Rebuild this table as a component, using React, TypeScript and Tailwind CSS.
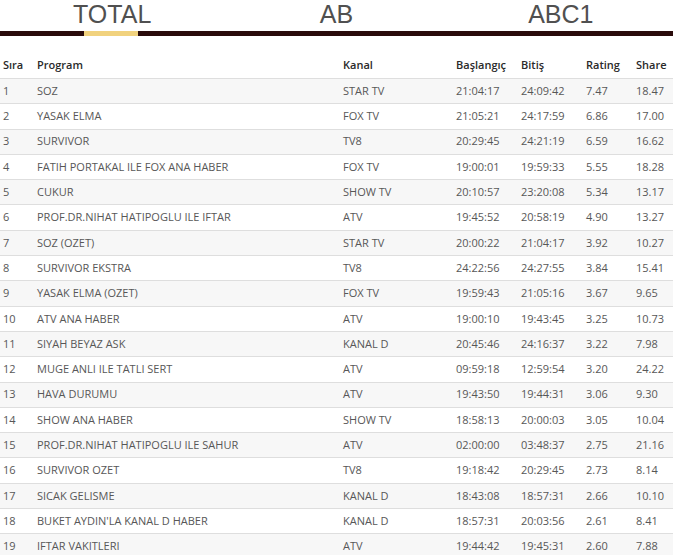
import React from "react";

const rows: [string, string, string, string, string, string][] = [
  ["SOZ", "STAR TV", "21:04:17", "24:09:42", "7.47", "18.47"],
  ["YASAK ELMA", "FOX TV", "21:05:21", "24:17:59", "6.86", "17.00"],
  ["SURVIVOR", "TV8", "20:29:45", "24:21:19", "6.59", "16.62"],
  ["FATIH PORTAKAL ILE FOX ANA HABER", "FOX TV", "19:00:01", "19:59:33", "5.55", "18.28"],
  ["CUKUR", "SHOW TV", "20:10:57", "23:20:08", "5.34", "13.17"],
  ["PROF.DR.NIHAT HATIPOGLU ILE IFTAR", "ATV", "19:45:52", "20:58:19", "4.90", "13.27"],
  ["SOZ (OZET)", "STAR TV", "20:00:22", "21:04:17", "3.92", "10.27"],
  ["SURVIVOR EKSTRA", "TV8", "24:22:56", "24:27:55", "3.84", "15.41"],
  ["YASAK ELMA (OZET)", "FOX TV", "19:59:43", "21:05:16", "3.67", "9.65"],
  ["ATV ANA HABER", "ATV", "19:00:10", "19:43:45", "3.25", "10.73"],
  ["SIYAH BEYAZ ASK", "KANAL D", "20:45:46", "24:16:37", "3.22", "7.98"],
  ["MUGE ANLI ILE TATLI SERT", "ATV", "09:59:18", "12:59:54", "3.20", "24.22"],
  ["HAVA DURUMU", "ATV", "19:43:50", "19:44:31", "3.06", "9.30"],
  ["SHOW ANA HABER", "SHOW TV", "18:58:13", "20:00:03", "3.05", "10.04"],
  ["PROF.DR.NIHAT HATIPOGLU ILE SAHUR", "ATV", "02:00:00", "03:48:37", "2.75", "21.16"],
  ["SURVIVOR OZET", "TV8", "19:18:42", "20:29:45", "2.73", "8.14"],
  ["SICAK GELISME", "KANAL D", "18:43:08", "18:57:31", "2.66", "10.10"],
  ["BUKET AYDIN'LA KANAL D HABER", "KANAL D", "18:57:31", "20:03:56", "2.61", "8.41"],
  ["IFTAR VAKITLERI", "ATV", "19:44:42", "19:45:31", "2.60", "7.88"],
];

const cols = "grid grid-cols-[34px_306px_113px_65px_65px_50px_40px] items-center";

function Tab({ label }: { label: string }) {
  return (
    <div className="text-[25px] leading-[28px] text-[#505050] font-['Liberation_Sans',sans-serif]">
      {label}
    </div>
  );
}

export default function App() {
  return (
    <div className="w-[673px] h-[555px] overflow-hidden bg-white font-['Open_Sans',sans-serif]">
      <div className="grid grid-cols-3 text-center h-[31px]">
        <Tab label="TOTAL" />
        <Tab label="AB" />
        <Tab label="ABC1" />
      </div>
      <div className="h-[5px] bg-[#2a0b0b] grid grid-cols-3">
        <div className="flex justify-center">
          <div className="w-[54px] h-[5px] bg-[#f1d27e] mr-[2px]" />
        </div>
      </div>
      <div className="mt-[17px] text-[11px]">
        <div className={`${cols} h-[25px] pl-[3px] font-semibold text-[#2a2a2a]`}>
          <div>Sıra</div>
          <div>Program</div>
          <div>Kanal</div>
          <div>Başlangıç</div>
          <div>Bitiş</div>
          <div>Rating</div>
          <div>Share</div>
        </div>
        {rows.map((r, i) => (
          <div
            key={i}
            className={`${cols} h-[25.3px] pl-[3px] border-t border-[#dedede] text-[#575757] ${
              i % 2 === 0 ? "bg-[#f7f7f7]" : "bg-white"
            }`}
          >
            <div>{i + 1}</div>
            {r.map((c, j) => (
              <div key={j} className="whitespace-nowrap">
                {c}
              </div>
            ))}
          </div>
        ))}
      </div>
    </div>
  );
}
